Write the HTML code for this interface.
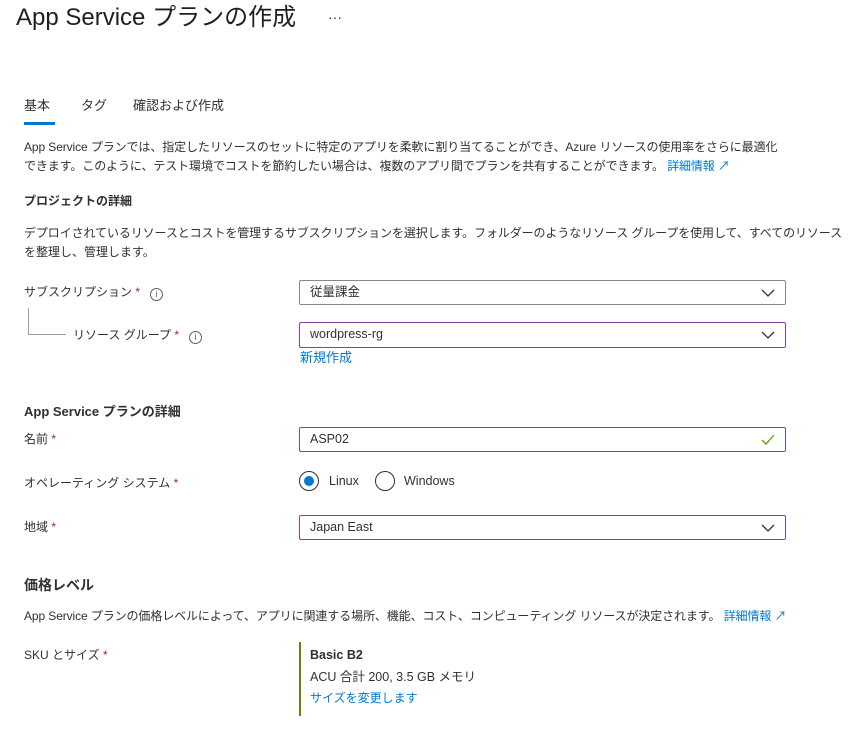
<!DOCTYPE html>
<html><head><meta charset="utf-8"><style>
*{margin:0;padding:0;box-sizing:border-box}
body{width:850px;height:731px;background:#fff;font-family:"Liberation Sans","Noto Sans CJK JP",sans-serif;font-size:12px;color:#323130;position:relative;overflow:hidden}
.a{position:absolute;white-space:nowrap;line-height:18px}
.b{font-weight:bold}
.r{color:#a4262c}
.lnk{color:#0078d4}
.box{position:absolute;left:299px;width:487px;height:25px;border:1px solid #8a8886;border-radius:2px;padding-left:10px;line-height:23px;font-size:12.5px}
.p{border-color:#8a3ea5}
.chev{position:absolute;right:10px;top:8px}
.info{display:inline-block;width:13px;height:13px;border:1px solid #605e5c;border-radius:50%;font-size:9px;text-align:center;line-height:11px;margin-left:10px;vertical-align:-1px;color:#605e5c}
</style></head><body>
<div class="a" style="left:16px;top:2px;font-size:24px;line-height:32px;color:#201f1e">App Service プランの作成</div>
<div class="a" style="left:328px;top:8px;font-size:14px;color:#323130">···</div>

<div class="a" style="left:24px;top:97px;font-size:13px">基本</div>
<div class="a" style="left:81px;top:97px;font-size:13px">タグ</div>
<div class="a" style="left:133px;top:97px;font-size:13px">確認および作成</div>
<div style="position:absolute;left:24px;top:122px;width:31px;height:3px;background:#0078d4"></div>

<div class="a" style="left:24px;top:138px;letter-spacing:-0.1px">App Service プランでは、指定したリソースのセットに特定のアプリを柔軟に割り当てることができ、Azure リソースの使用率をさらに最適化</div>
<div class="a" style="left:24px;top:157px;letter-spacing:-0.1px">できます。このように、テスト環境でコストを節約したい場合は、複数のアプリ間でプランを共有することができます。 <span class="lnk">詳細情報 ↗</span></div>

<div class="a b" style="left:24px;top:192px">プロジェクトの詳細</div>
<div class="a" style="left:24px;top:224px;letter-spacing:-0.1px">デプロイされているリソースとコストを管理するサブスクリプションを選択します。フォルダーのようなリソース グループを使用して、すべてのリソース</div>
<div class="a" style="left:24px;top:243px">を整理し、管理します。</div>

<div class="a" style="left:24px;top:283px">サブスクリプション <span class="r">*</span><span class="info">i</span></div>
<div class="box" style="top:280px">従量課金<svg class="chev" width="14" height="8"><path d="M1 1l6 6 6-6" stroke="#323130" stroke-width="1.3" fill="none"/></svg></div>

<div style="position:absolute;left:28px;top:308px;width:38px;height:27px;border-left:1px solid #a19f9d;border-bottom:1px solid #a19f9d"></div>
<div class="a" style="left:73px;top:326px">リソース グループ <span class="r">*</span><span class="info">i</span></div>
<div class="box p" style="top:322px;height:26px">wordpress-rg<svg class="chev" width="14" height="8"><path d="M1 1l6 6 6-6" stroke="#323130" stroke-width="1.3" fill="none"/></svg></div>
<div class="a lnk" style="left:300px;top:349px;font-size:13px">新規作成</div>

<div class="a b" style="left:24px;top:403px;font-size:13px">App Service プランの詳細</div>
<div class="a" style="left:24px;top:430px">名前 <span class="r">*</span></div>
<div class="box p" style="top:427px">ASP02<svg class="chev" style="top:6px" width="14" height="11"><path d="M1 6l4 4 8-9" stroke="#57a300" stroke-width="1.3" fill="none"/></svg></div>

<div class="a" style="left:24px;top:474px">オペレーティング システム <span class="r">*</span></div>
<div style="position:absolute;left:299px;top:471px;width:20px;height:20px;border:1px solid #323130;border-radius:50%"><div style="position:absolute;left:4px;top:4px;width:10px;height:10px;border-radius:50%;background:#0078d4"></div></div>
<div class="a" style="left:329px;top:472px;font-size:12.5px">Linux</div>
<div style="position:absolute;left:375px;top:471px;width:20px;height:20px;border:1px solid #323130;border-radius:50%"></div>
<div class="a" style="left:404px;top:472px;font-size:12.5px">Windows</div>

<div class="a" style="left:24px;top:518px">地域 <span class="r">*</span></div>
<div class="box p" style="top:515px">Japan East<svg class="chev" width="14" height="8"><path d="M1 1l6 6 6-6" stroke="#323130" stroke-width="1.3" fill="none"/></svg></div>

<div class="a b" style="left:24px;top:576px;font-size:14px">価格レベル</div>
<div class="a" style="left:24px;top:607px;letter-spacing:-0.1px">App Service プランの価格レベルによって、アプリに関連する場所、機能、コスト、コンピューティング リソースが決定されます。 <span class="lnk">詳細情報 ↗</span></div>

<div class="a" style="left:24px;top:646px">SKU とサイズ <span class="r">*</span></div>
<div style="position:absolute;left:299px;top:642px;width:2px;height:74px;background:#5c8a00"></div>
<div class="a b" style="left:310px;top:646px;font-size:12.5px">Basic B2</div>
<div class="a" style="left:310px;top:668px;font-size:12.5px">ACU 合計 200, 3.5 GB メモリ</div>
<div class="a lnk" style="left:310px;top:689px">サイズを変更します</div>
</body></html>
